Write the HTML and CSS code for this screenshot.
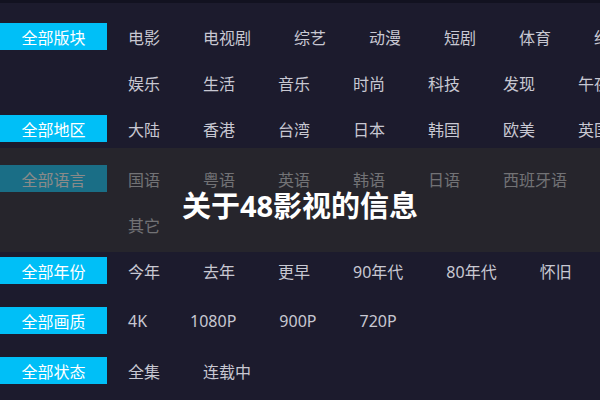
FILE: index.html
```html
<!DOCTYPE html>
<html lang="zh-CN">
<head>
   <meta charset="UTF-8">
   <meta name="viewport" content="width=device-width, initial-scale=1">
   <link rel="stylesheet" href="styles.css">
   <title>48影视</title>
</head>

<body>

   <div class="filtro">
      <div class="grupo">
         <span class="rotulo">全部版块</span>
         <div class="linhas">
            <ul class="linha">
               <li>电影</li><li>电视剧</li><li>综艺</li><li>动漫</li><li>短剧</li><li>体育</li><li>纪录片</li>
            </ul>
            <ul class="linha">
               <li>娱乐</li><li>生活</li><li>音乐</li><li>时尚</li><li>科技</li><li>发现</li><li>午夜</li>
            </ul>
         </div>
      </div>

      <div class="grupo">
         <span class="rotulo">全部地区</span>
         <div class="linhas">
            <ul class="linha">
               <li>大陆</li><li>香港</li><li>台湾</li><li>日本</li><li>韩国</li><li>欧美</li><li>英国</li>
            </ul>
         </div>
      </div>

      <div class="grupo">
         <span class="rotulo">全部语言</span>
         <div class="linhas">
            <ul class="linha">
               <li>国语</li><li>粤语</li><li>英语</li><li>韩语</li><li>日语</li><li>西班牙语</li>
            </ul>
            <ul class="linha">
               <li>其它</li>
            </ul>
         </div>
      </div>

      <div class="grupo">
         <span class="rotulo">全部年份</span>
         <div class="linhas">
            <ul class="linha">
               <li>今年</li><li>去年</li><li>更早</li><li>90年代</li><li>80年代</li><li>怀旧</li>
            </ul>
         </div>
      </div>

      <div class="grupo">
         <span class="rotulo">全部画质</span>
         <div class="linhas">
            <ul class="linha">
               <li>4K</li><li>1080P</li><li>900P</li><li>720P</li>
            </ul>
         </div>
      </div>

      <div class="grupo">
         <span class="rotulo">全部状态</span>
         <div class="linhas">
            <ul class="linha">
               <li>全集</li><li>连载中</li>
            </ul>
         </div>
      </div>
   </div>

   <!-- faixa por cima da lista -->
   <div class="faixa">
      <h2>关于48影视的信息</h2>
   </div>

</body>
</html>
```

FILE: styles.css
```css
* {
   border:0;
   margin:0;
   padding:0;
   box-sizing:border-box;
   font-family:"Noto Sans", "Noto Sans CJK SC", sans-serif;
}

body {
   background:#1c1b2d;
   border-top:3px solid #121220;
   width:600px;
   height:400px;
   overflow:hidden;
   position:relative;
   color:#c8c8d2;
}

.filtro {
   padding-top:11px;
}

.grupo {
   display:flex;
   min-height:50px;
}

.rotulo {
   background:#00bff7;
   color:#fff;
   font-size:16px;
   display:flex;
   align-items:center;
   justify-content:center;
   flex-shrink:0;
   width:107px;
   height:27px;
   margin-top:9px;
}

.linhas {
   margin-left:21px;
}

.linha {
   list-style:none;
   display:flex;
   align-items:center;
   gap:43px;
   height:46px;
   white-space:nowrap;
   font-size:16px;
}

.faixa {
   background:rgba(46,46,44,.56);
   position:absolute;
   top:145px;
   left:0;
   width:100%;
   height:104px;
   display:flex;
   align-items:center;
   justify-content:center;
   padding-top:8px;
}

.faixa h2 {
   color:#fff;
   font-size:29px;
   font-weight:bold;
   letter-spacing:0;
}
```
